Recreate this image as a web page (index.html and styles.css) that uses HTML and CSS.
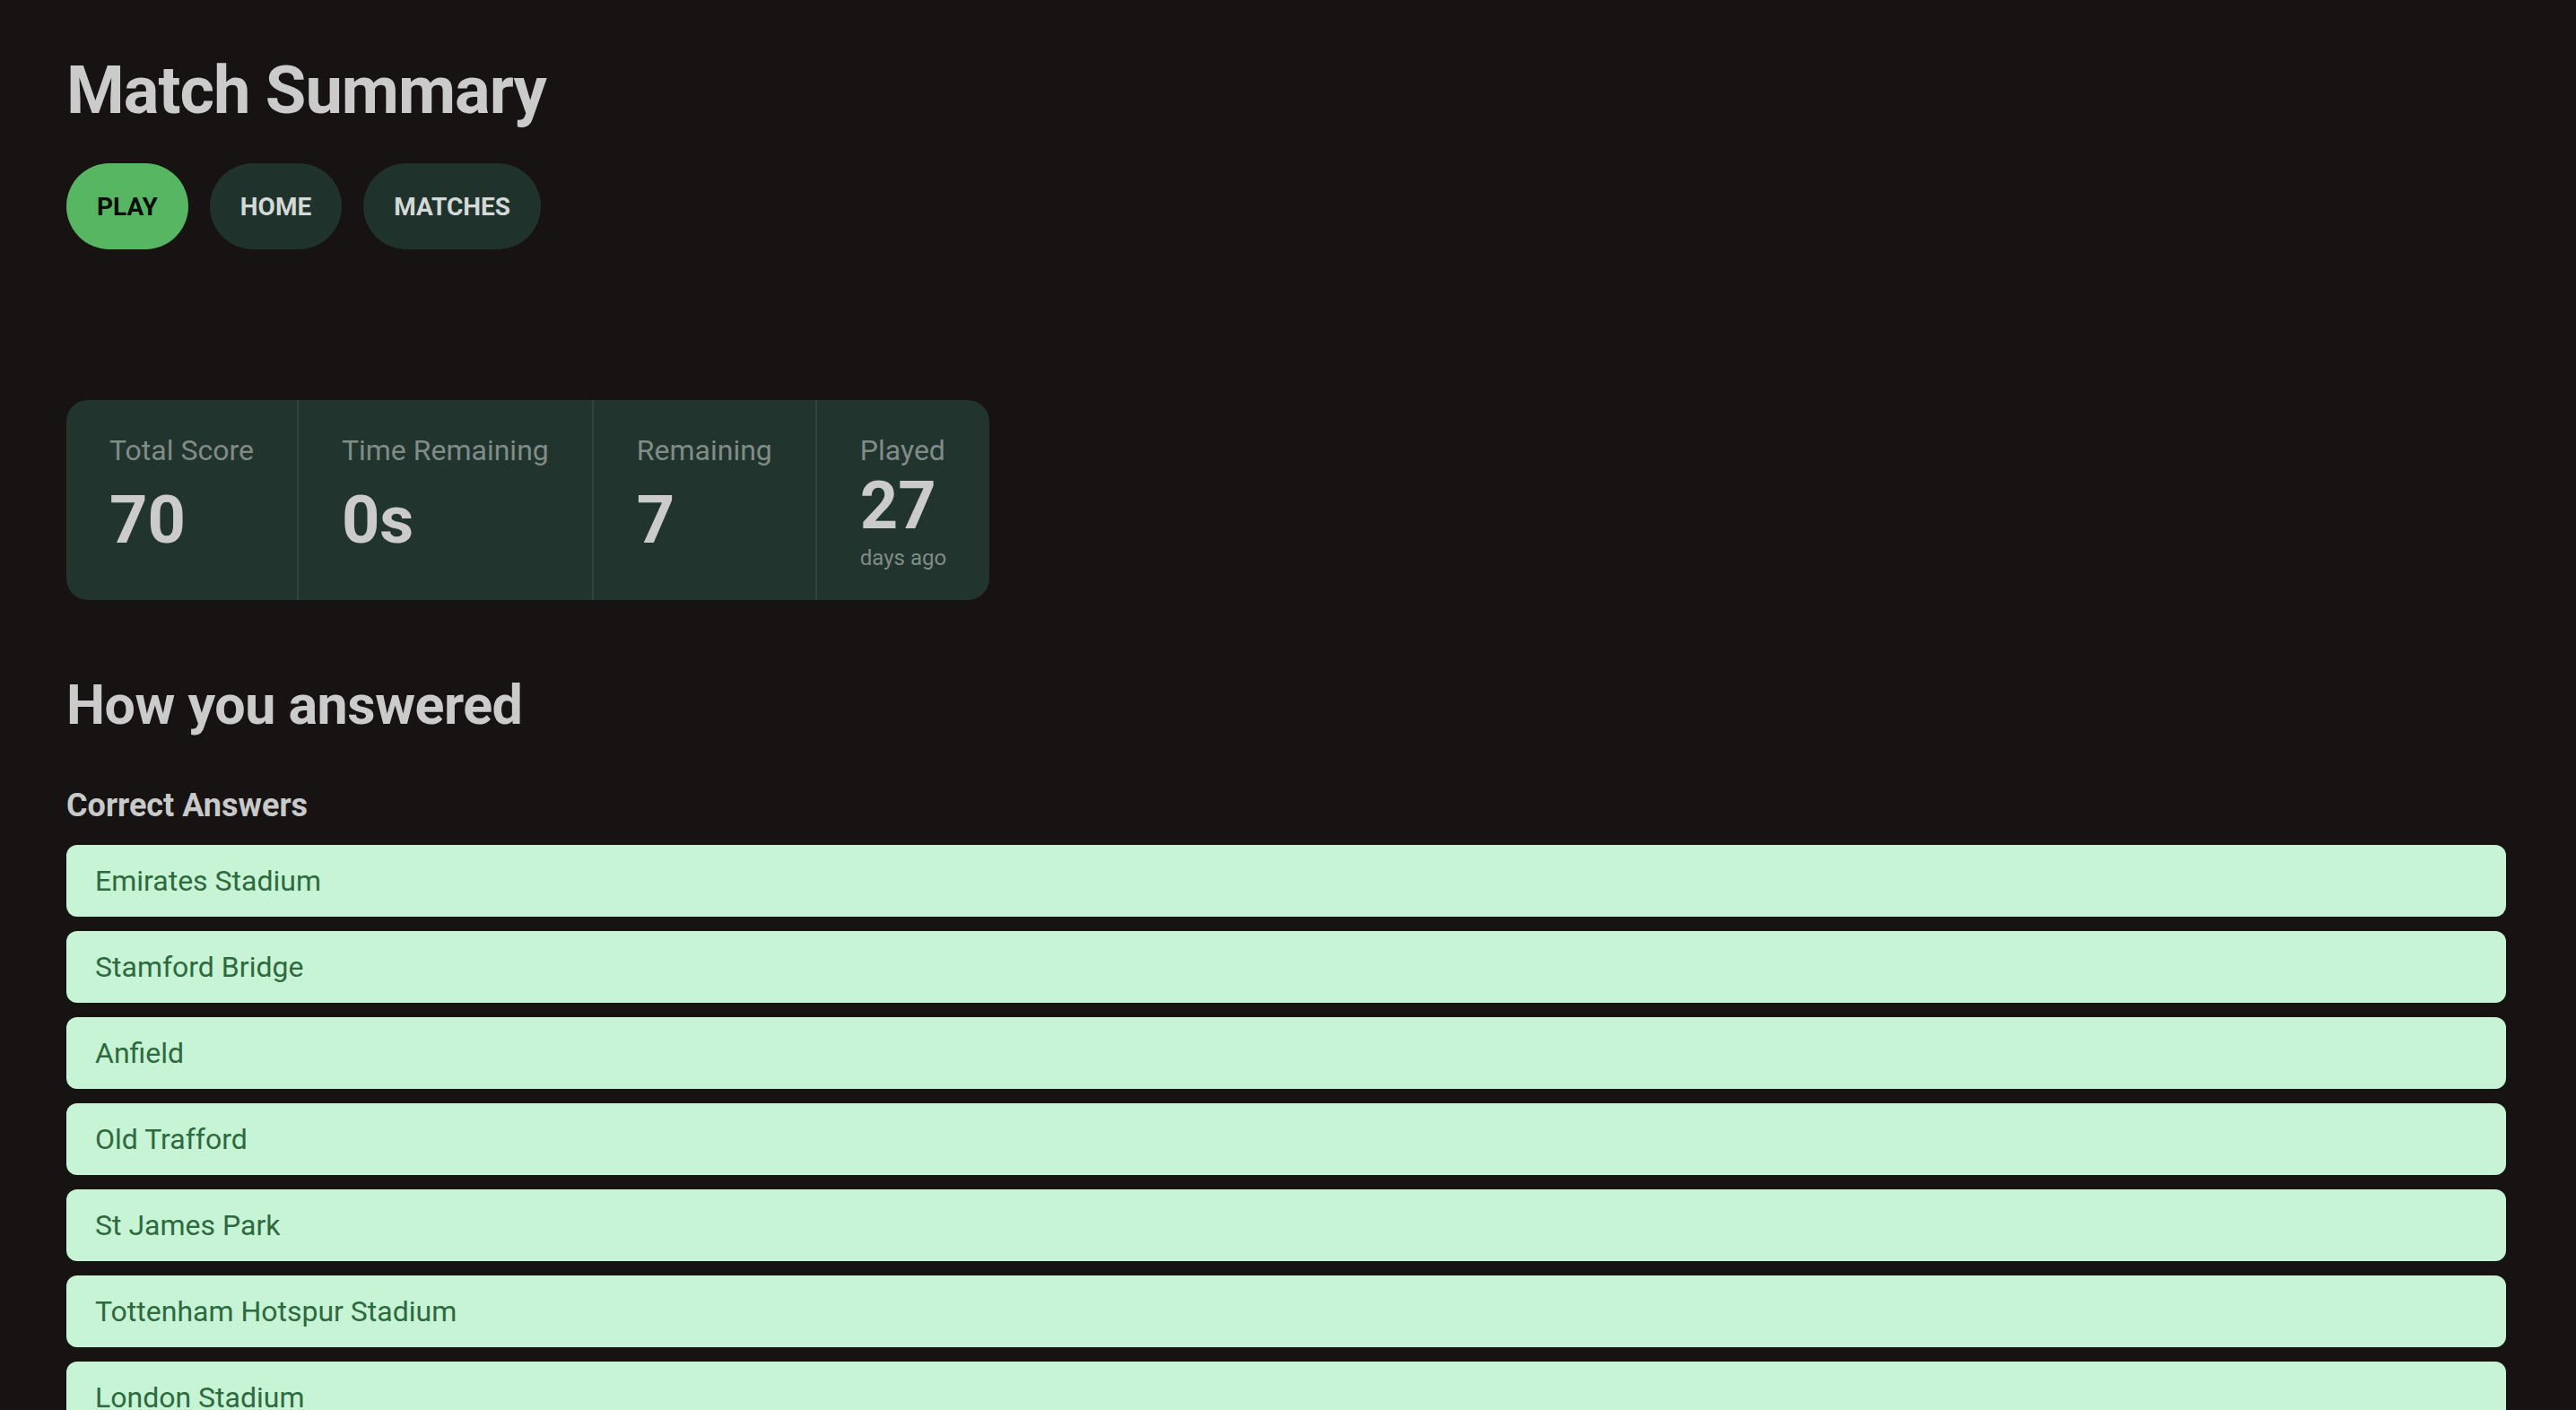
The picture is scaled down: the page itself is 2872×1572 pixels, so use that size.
FILE: index.html
```html
<!DOCTYPE html>
<html lang="en">
<head>
<meta charset="utf-8">
<title>Match Summary</title>
<link rel="stylesheet" href="styles.css">
</head>
<body>
<main class="page">
  <h1 class="title">Match Summary</h1>
  <nav class="nav">
    <a class="pill pill-primary" href="#">PLAY</a>
    <a class="pill" href="#">HOME</a>
    <a class="pill" href="#">MATCHES</a>
  </nav>

  <section class="stats">
    <div class="stat">
      <div class="stat-label">Total Score</div>
      <div class="stat-value stat-value-low">70</div>
    </div>
    <div class="stat">
      <div class="stat-label">Time Remaining</div>
      <div class="stat-value stat-value-low">0s</div>
    </div>
    <div class="stat">
      <div class="stat-label">Remaining</div>
      <div class="stat-value stat-value-low">7</div>
    </div>
    <div class="stat">
      <div class="stat-label">Played</div>
      <div class="stat-value">27</div>
      <div class="stat-sub">days ago</div>
    </div>
  </section>

  <h2 class="section-title">How you answered</h2>
  <h3 class="group-title">Correct Answers</h3>
  <ul class="answers">
    <li class="answer">Emirates Stadium</li>
    <li class="answer">Stamford Bridge</li>
    <li class="answer">Anfield</li>
    <li class="answer">Old Trafford</li>
    <li class="answer">St James Park</li>
    <li class="answer">Tottenham Hotspur Stadium</li>
    <li class="answer">London Stadium</li>
  </ul>
</main>
</body>
</html>
```

FILE: styles.css
```css
html, body {
  margin: 0;
  padding: 0;
  background: #161312;
}

body {
  font-family: Roboto, "Liberation Sans", Arial, sans-serif;
  color: #cbcbcb;
}

.page {
  padding: 56px 78px 40px 74px;
}

.title {
  margin: 0;
  font-size: 74px;
  line-height: 90px;
  font-weight: 700;
  color: #cbcbcb;
  letter-spacing: -1px;
}

.nav {
  display: flex;
  gap: 24px;
  margin-top: 36px;
}

.pill {
  display: flex;
  align-items: center;
  justify-content: center;
  height: 96px;
  padding: 0 34px;
  border-radius: 48px;
  background: #1f332c;
  color: #d3d9d6;
  font-size: 28px;
  font-weight: 700;
  text-decoration: none;
}

.pill-primary {
  background: #56b662;
  color: #0b0b0b;
}

.stats {
  display: inline-flex;
  margin-top: 168px;
  background: #21342e;
  border-radius: 24px;
}

.stat {
  display: flex;
  flex-direction: column;
  padding: 38px 48px 33px;
}

.stat + .stat {
  border-left: 2px solid #314540;
}

.stat-label {
  font-size: 32px;
  line-height: 36px;
  color: #808c86;
}

.stat-value {
  margin-top: 7px;
  font-size: 74px;
  line-height: 74px;
  font-weight: 700;
  color: #cbcbcb;
}

.stat-value-low {
  margin-top: 23px;
}

.stat-sub {
  margin-top: 7px;
  font-size: 24px;
  line-height: 28px;
  color: #808c86;
}

.section-title {
  margin: 80px 0 0;
  font-size: 61px;
  line-height: 74px;
  font-weight: 700;
  color: #cbcbcb;
  letter-spacing: -0.5px;
}

.group-title {
  margin: 54px 0 0;
  font-size: 36px;
  line-height: 42px;
  font-weight: 700;
  color: #c9c9c9;
}

.answers {
  list-style: none;
  margin: 23px 0 0;
  padding: 0;
  display: flex;
  flex-direction: column;
  gap: 16px;
}

.answer {
  background: #c6f4d4;
  color: #2d6a3e;
  border-radius: 12px;
  padding: 16px 32px;
  font-size: 32px;
  line-height: 48px;
}
```
